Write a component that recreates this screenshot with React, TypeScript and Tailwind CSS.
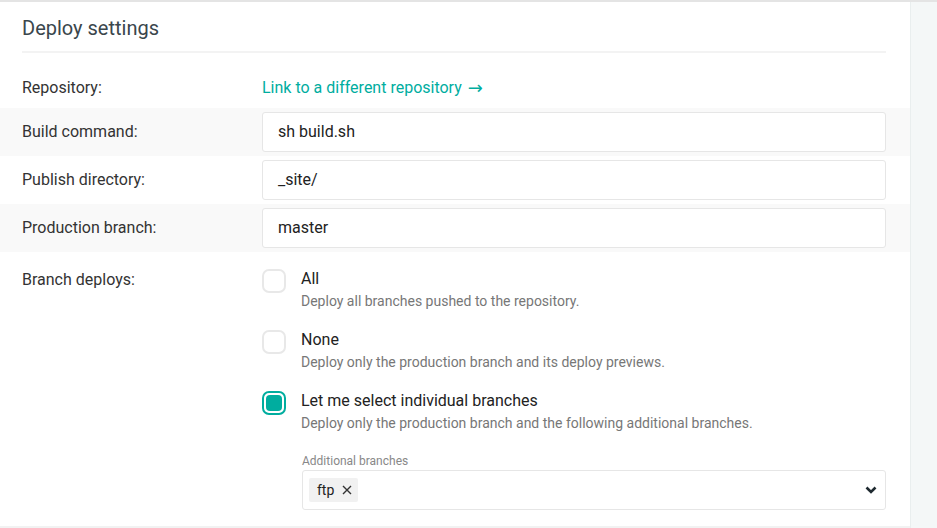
import React from 'react';

const font = { fontFamily: 'Roboto, "Liberation Sans", sans-serif' };

const Field: React.FC<{ label: string; value: string; shaded?: boolean }> = ({ label, value, shaded }) => (
  <div className={`flex items-center h-[48px] pl-[22px] pr-[24px] ${shaded ? 'bg-[#f9f9f9]' : 'bg-white'}`}>
    <div className="w-[240px] text-[16px] text-[#333]">{label}</div>
    <div className="flex-1 h-[40px] flex items-center px-[15px] bg-white border border-[#e6e6e6] rounded-[3px] text-[16px] text-[#222]">
      {value}
    </div>
  </div>
);

const Box: React.FC<{ checked?: boolean }> = ({ checked }) =>
  checked ? (
    <div className="w-[24px] h-[24px] rounded-[7px] border-2 border-[#00ad9f] p-[2px] shrink-0">
      <div className="w-full h-full rounded-[4px] bg-[#00ad9f]" />
    </div>
  ) : (
    <div className="w-[24px] h-[24px] rounded-[7px] border-2 border-[#e8e8e8] bg-white shrink-0" />
  );

const Option: React.FC<{ title: string; desc: string; checked?: boolean }> = ({ title, desc, checked }) => (
  <div className="flex gap-[15px]">
    <Box checked={checked} />
    <div>
      <div className="text-[16px] leading-[20px] text-[#222]">{title}</div>
      <div className="text-[14px] leading-[20px] text-[#777] mt-[2px]">{desc}</div>
    </div>
  </div>
);

export default function App() {
  return (
    <div className="flex w-[937px] h-[528px] bg-white border-t-2 border-[#e4e4e4]" style={font}>
      <div className="w-[910px] flex flex-col border-b-2 border-[#f2f2f2]">
        <div className="px-[22px]">
          <div className="pt-[14px] pb-[11px] text-[20px] leading-[24px] text-[#3a464c]">Deploy settings</div>
          <div className="w-[864px] h-[2px] bg-[#f3f3f3]" />
        </div>
        <div className="flex items-center h-[55px] pt-[14px] px-[22px]">
          <div className="w-[240px] text-[16px] text-[#333]">Repository:</div>
          <div className="text-[16px] text-[#00ad9f] flex items-center gap-[6px]">
            Link to a different repository
            <span className="text-[18px] leading-[16px]" style={{ fontFamily: '"DejaVu Sans", sans-serif' }}>→</span>
          </div>
        </div>
        <Field label="Build command:" value="sh build.sh" shaded />
        <Field label="Publish directory:" value="_site/" />
        <Field label="Production branch:" value="master" shaded />
        <div className="flex flex-1 pl-[22px] pr-[24px] pt-[17px]">
          <div className="w-[240px] text-[16px] text-[#333] leading-[20px] pt-[1px]">Branch deploys:</div>
          <div className="flex-1 flex flex-col gap-[19px]">
            <Option title="All" desc="Deploy all branches pushed to the repository." />
            <Option title="None" desc="Deploy only the production branch and its deploy previews." />
            <Option
              title="Let me select individual branches"
              desc="Deploy only the production branch and the following additional branches."
              checked
            />
            <div className="pl-[40px] mt-[1px]">
              <div className="text-[12px] leading-[16px] text-[#888] mb-[1px]">Additional branches</div>
              <div className="h-[40px] flex items-center px-[6px] border border-[#e6e6e6] rounded-[3px]">
                <div className="flex items-center gap-[8px] bg-[#f1f1f1] rounded-[2px] h-[24px] pl-[8px] pr-[6px] text-[14px] text-[#222]">
                  ftp
                  <svg width="10" height="10" viewBox="0 0 10 10" stroke="#333" strokeWidth="1.4">
                    <path d="M1 1l8 8M9 1l-8 8" />
                  </svg>
                </div>
                <div className="flex-1" />
                <svg width="12" height="8" viewBox="0 0 12 8" className="mr-[2px]">
                  <path d="M1.5 1.5l4.5 4.5 4.5-4.5" fill="none" stroke="#1f2a30" strokeWidth="2.6" />
                </svg>
              </div>
            </div>
          </div>
        </div>
      </div>
      <div className="flex-1 bg-[#f4f7f7] border-l border-[#e9eeee]" />
    </div>
  );
}
